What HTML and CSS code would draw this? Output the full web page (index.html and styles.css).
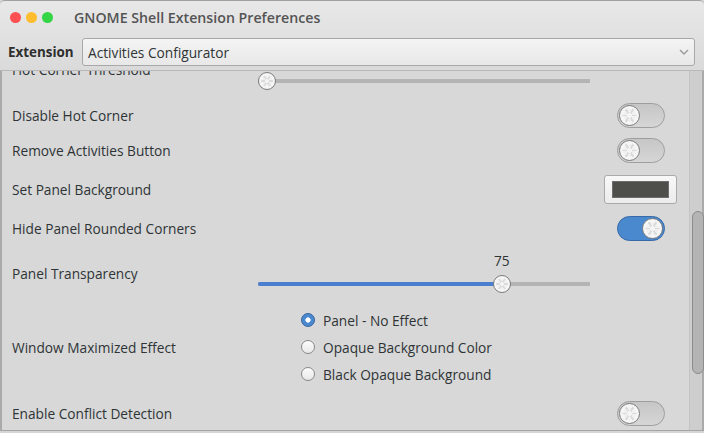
FILE: index.html
```html
<!DOCTYPE html>
<html>
<head>
<meta charset="utf-8" />
<title>GNOME Shell Extension Preferences</title>
<link rel="stylesheet" href="styles.css">
</head>
<body>

<div class="window">
	<div class="header">
		<div class="titlebar">
			<div class="lights">
				<span class="light close"></span>
				<span class="light min"></span>
				<span class="light max"></span>
			</div>
			<div class="title">GNOME Shell Extension Preferences</div>
		</div>

		<div class="toolbar">
			<div class="toolLabel">Extension</div>
			<div class="combo">
				<span>Activities Configurator</span>
				<svg class="chevron" viewBox="0 0 10 6" width="10" height="6">
					<path d="M1,1 L5,5 L9,1" fill="none" stroke="#9a9a9a" stroke-width="1.4"/>
				</svg>
			</div>
		</div>
	</div>

	<div class="frame">
		<div class="viewport">
			<div class="list">

				<div class="row row-threshold">
					<div class="label">Hot Corner Threshold</div>
					<div class="slider">
						<div class="sliderValue" style="padding-left: 5px">0</div>
						<div class="track">
							<div class="fill" style="width: 0px"></div>
							<div class="handle" style="left: 0px"></div>
						</div>
					</div>
				</div>

				<div class="row row-disable">
					<div class="label">Disable Hot Corner</div>
					<div class="switch"><div class="knob"></div></div>
				</div>

				<div class="row row-remove">
					<div class="label">Remove Activities Button</div>
					<div class="switch"><div class="knob"></div></div>
				</div>

				<div class="row row-background">
					<div class="label">Set Panel Background</div>
					<div class="colorButton"><div class="swatch"></div></div>
				</div>

				<div class="row row-rounded">
					<div class="label">Hide Panel Rounded Corners</div>
					<div class="switch on"><div class="knob"></div></div>
				</div>

				<div class="row row-transparency">
					<div class="label">Panel Transparency</div>
					<div class="slider">
						<div class="sliderValue" style="padding-left: 238px">75</div>
						<div class="track">
							<div class="fill" style="width: 244px"></div>
							<div class="handle" style="left: 235px"></div>
						</div>
					</div>
				</div>

				<div class="row row-effect">
					<div class="label">Window Maximized Effect</div>
					<div class="radios">
						<label class="radio checked"><span class="dot"></span>Panel - No Effect</label>
						<label class="radio"><span class="dot"></span>Opaque Background Color</label>
						<label class="radio"><span class="dot"></span>Black Opaque Background</label>
					</div>
				</div>

				<div class="row row-conflict">
					<div class="label">Enable Conflict Detection</div>
					<div class="switch"><div class="knob"></div></div>
				</div>

			</div>
		</div>

		<div class="scrollbar">
			<div class="thumb"></div>
		</div>
	</div>
</div>

</body>
</html>
```

FILE: styles.css
```css
html, body {
	margin: 0;
	padding: 0;
	width: 100%;
	height: 100%;
	font-family: "Open Sans", "DejaVu Sans", sans-serif;
	font-size: 13.7px;
	color: rgb(46, 52, 54);
	background: rgb(214, 214, 214);
	overflow: hidden;
}

.window {
	height: 433px;
	display: flex;
	flex-direction: column;
	border-top: 1px solid rgb(160, 160, 160);
	border-radius: 5px 5px 0 0;
	box-sizing: border-box;
	overflow: hidden;
}

.header {
	background: linear-gradient(rgb(232, 232, 232), rgb(218, 218, 218));
	border-bottom: 1px solid rgb(184, 184, 184);
	height: 70px;
	box-sizing: border-box;
}

/* title bar */

.titlebar {
	height: 32px;
	display: flex;
	align-items: center;
}

.lights {
	display: flex;
	gap: 5px;
	padding-left: 10px;
	width: 64px;
}

.light {
	width: 11px;
	height: 11px;
	border-radius: 50%;
}

.light.close { background: rgb(252, 80, 82); }
.light.min { background: rgb(254, 189, 46); }
.light.max { background: rgb(52, 214, 70); }

.title {
	font-weight: 600;
	font-size: 14.2px;
	color: rgb(84, 84, 84);
	margin-top: 1px;
}

/* extension chooser */

.toolbar {
	display: flex;
	align-items: center;
	height: 37px;
	padding: 0 9px 0 8px;
}

.toolLabel {
	font-weight: bold;
	font-size: 13.4px;
	width: 74px;
	color: rgb(46, 46, 46);
}

.combo {
	flex: 1;
	height: 28px;
	box-sizing: border-box;
	border: 1px solid rgb(168, 168, 168);
	border-radius: 3px;
	background: linear-gradient(rgb(244, 244, 244), rgb(232, 232, 232));
	display: flex;
	align-items: center;
	justify-content: space-between;
	padding: 0 5px 0 5px;
	margin-top: 1px;
}

/* scrolled settings list */

.frame {
	flex: 1;
	display: flex;
	border-left: 2px solid rgb(170, 170, 170);
	border-bottom: 1px solid rgb(165, 165, 165);
	margin-bottom: 2px;
	overflow: hidden;
}

.viewport {
	flex: 1;
	overflow: hidden;
	background: rgb(216, 216, 216);
}

.list {
	margin-top: -28px;
	padding: 0 24px 0 10px;
}

.row {
	display: grid;
	grid-template-columns: 244px 1fr;
	align-items: center;
}

.row-threshold { height: 53px; }
.row-disable { height: 38px; }
.row-remove { height: 32px; }
.row-background { height: 46px; }
.row-rounded { height: 32px; }
.row-transparency { height: 58px; }
.row-effect { height: 90px; }
.row-conflict { height: 42px; }

.switch, .colorButton {
	justify-self: end;
}

/* switches */

.switch {
	width: 48px;
	height: 25px;
	box-sizing: border-box;
	border-radius: 13px;
	border: 1px solid rgb(158, 158, 158);
	background: linear-gradient(rgb(198, 198, 198), rgb(214, 214, 214));
	display: flex;
	align-items: center;
	padding: 0 1px;
}

.switch.on {
	background: rgb(74, 137, 206);
	border-color: rgb(56, 106, 168);
	justify-content: flex-end;
}

.knob, .handle {
	border-radius: 50%;
	box-sizing: border-box;
	border: 1px solid rgb(125, 125, 125);
	background:
		radial-gradient(circle, rgb(244, 244, 244) 18%, transparent 19%),
		linear-gradient(0deg, transparent 46%, rgba(214, 214, 214, 0.8) 46%, rgba(214, 214, 214, 0.8) 54%, transparent 54%),
		linear-gradient(60deg, transparent 46%, rgba(214, 214, 214, 0.8) 46%, rgba(214, 214, 214, 0.8) 54%, transparent 54%),
		linear-gradient(120deg, transparent 46%, rgba(214, 214, 214, 0.8) 46%, rgba(214, 214, 214, 0.8) 54%, transparent 54%),
		radial-gradient(circle, rgb(240, 240, 240) 40%, rgb(250, 250, 250) 62%, rgb(230, 230, 230));
	box-shadow: inset 0 0 0 2px rgb(246, 246, 246);
}

.knob {
	width: 21px;
	height: 21px;
}

/* color button */

.colorButton {
	width: 73px;
	height: 29px;
	box-sizing: border-box;
	border: 1px solid rgb(170, 170, 170);
	border-radius: 3px;
	background: linear-gradient(rgb(248, 248, 248), rgb(236, 236, 236));
	padding: 5px 7px;
	margin-right: -12px;
}

.swatch {
	height: 100%;
	background: rgb(78, 79, 75);
	border: 1px solid rgb(110, 110, 110);
	box-sizing: border-box;
}

/* sliders */

.slider {
	width: 336px;
	display: flex;
	flex-direction: column;
	gap: 6px;
}

.sliderValue {
	height: 16px;
	line-height: 16px;
}

.track {
	position: relative;
	height: 18px;
	background: linear-gradient(transparent 7px, rgb(180, 180, 180) 7px, rgb(180, 180, 180) 11px, transparent 11px);
	margin: 0 2px;
}

.fill {
	height: 4px;
	margin-top: 7px;
	background: rgb(74, 127, 208);
	border-radius: 2px;
}

.handle {
	position: absolute;
	top: 0;
	width: 18px;
	height: 18px;
}

/* radio group */

.radios {
	display: flex;
	flex-direction: column;
	gap: 9px;
	margin-left: 45px;
}

.radio {
	display: flex;
	align-items: center;
	gap: 8px;
	height: 18px;
}

.dot {
	width: 14px;
	height: 14px;
	border-radius: 50%;
	box-sizing: border-box;
	border: 1px solid rgb(136, 136, 136);
	background: linear-gradient(rgb(252, 252, 252), rgb(232, 232, 232));
}

.radio.checked .dot {
	border-color: rgb(52, 98, 160);
	background: radial-gradient(circle, white 28%, rgb(74, 137, 206) 34%);
}

/* scrollbar */

.scrollbar {
	width: 15px;
	background: rgb(206, 206, 206);
	border-left: 1px solid rgb(196, 196, 196);
	border-right: 2px solid rgb(170, 170, 170);
	padding: 140px 0 0 2px;
	box-sizing: border-box;
}

.thumb {
	width: 12px;
	height: 163px;
	border-radius: 6px;
	border: 1px solid rgb(140, 140, 140);
	background: rgb(180, 180, 180);
	box-sizing: border-box;
}
```
